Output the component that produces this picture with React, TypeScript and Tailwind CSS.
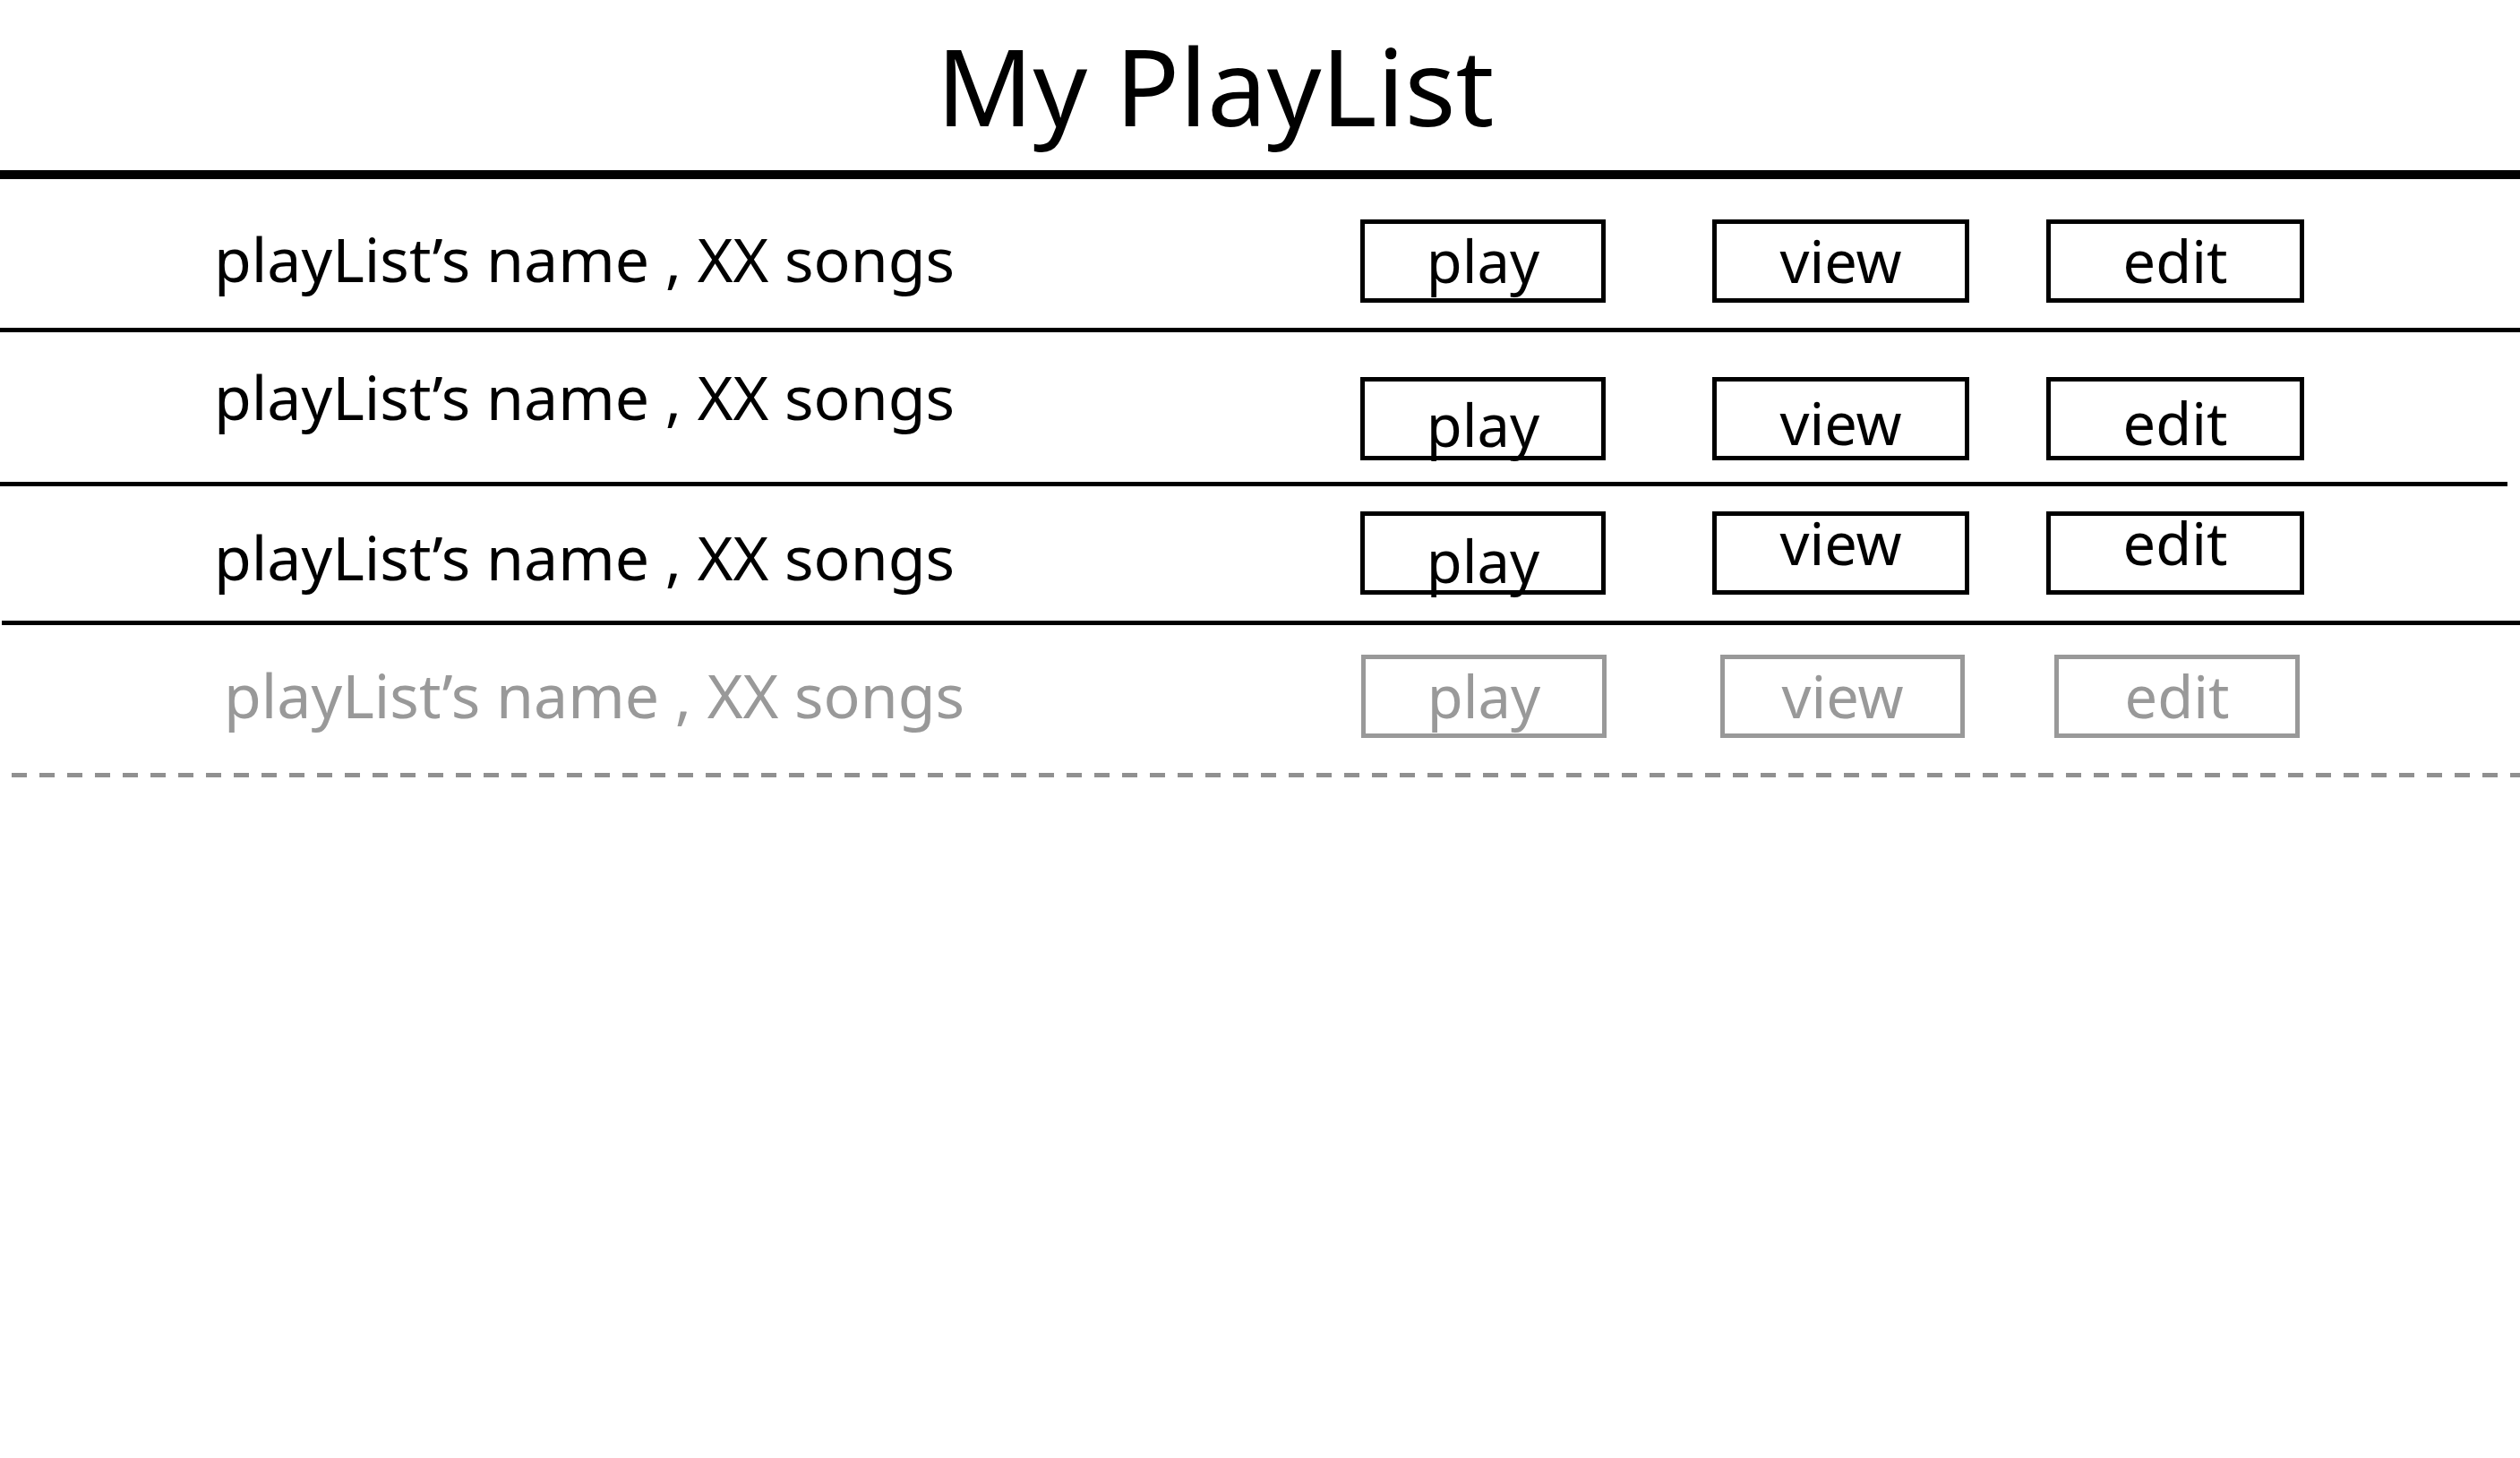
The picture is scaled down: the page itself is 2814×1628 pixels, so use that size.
const font = { fontFamily: '"Noto Sans", "Open Sans", sans-serif' };

type Btn = { label: string; w: string; text: string };
type Row = {
  height: string;
  labelCol: string;
  label: string;
  btnTop: string;
  gray?: boolean;
  buttons: Btn[];
  gaps: string[];
};

const rows: Row[] = [
  {
    height: 'h-[166px]',
    labelCol: 'w-[1519px] pl-[239px] pt-[55px]',
    label: 'text-black',
    btnTop: 'mt-[45px]',
    buttons: [
      { label: 'play', w: 'w-[274px]', text: 'pt-[9px]' },
      { label: 'view', w: 'w-[287px]', text: 'pt-[9px]' },
      { label: 'edit', w: 'w-[288px]', text: 'pt-[9px]' },
    ],
    gaps: ['ml-[119px]', 'ml-[86px]'],
  },
  {
    height: 'h-[167px]',
    labelCol: 'w-[1519px] pl-[239px] pt-[38px]',
    label: 'text-black',
    btnTop: 'mt-[50px]',
    buttons: [
      { label: 'play', w: 'w-[274px]', text: 'pt-[16px]' },
      { label: 'view', w: 'w-[287px]', text: 'pt-[14px]' },
      { label: 'edit', w: 'w-[288px]', text: 'pt-[14px]' },
    ],
    gaps: ['ml-[119px]', 'ml-[86px]'],
  },
  {
    height: 'h-[150px]',
    labelCol: 'w-[1519px] pl-[239px] pt-[45px]',
    label: 'text-black',
    btnTop: 'mt-[28px]',
    buttons: [
      { label: 'play', w: 'w-[274px]', text: 'pt-[18px]' },
      { label: 'view', w: 'w-[287px]', text: '-mt-[2px]' },
      { label: 'edit', w: 'w-[288px]', text: '-mt-[2px]' },
    ],
    gaps: ['ml-[119px]', 'ml-[86px]'],
  },
  {
    height: 'h-[165px]',
    labelCol: 'w-[1520px] pl-[250px] pt-[44px]',
    label: 'text-[#999999]',
    btnTop: 'mt-[33px]',
    gray: true,
    buttons: [
      { label: 'play', w: 'w-[274px]', text: 'pt-[9px]' },
      { label: 'view', w: 'w-[273px]', text: 'pt-[9px]' },
      { label: 'edit', w: 'w-[274px]', text: 'pt-[9px]' },
    ],
    gaps: ['ml-[127px]', 'ml-[100px]'],
  },
];

const separators = [
  'h-[5px] w-full bg-black',
  'h-[5px] w-[2800px] bg-black',
  'h-[5px] ml-[2px] bg-black',
  'h-[5px] ml-[13px] bg-[image:repeating-linear-gradient(to_right,#909090_0px,#909090_17px,transparent_17px,transparent_31px)]',
];

function PlaylistRow({ row }: { row: Row }) {
  return (
    <div className={`flex items-start ${row.height}`}>
      <div className={`shrink-0 ${row.labelCol}`}>
        <span className={`block whitespace-nowrap text-[68px] leading-none ${row.label}`}>
          playList’s name , XX songs
        </span>
      </div>
      <div className={`flex items-start ${row.btnTop}`}>
        {row.buttons.map((b, i) => (
          <div
            key={b.label}
            className={`flex h-[93px] shrink-0 items-start justify-center border-[5px] ${b.w} ${
              row.gray ? 'border-[#999999] text-[#999999]' : 'border-black text-black'
            } ${i > 0 ? row.gaps[i - 1] : ''}`}
          >
            <span className={`block whitespace-nowrap text-[65px] leading-none ${b.text}`}>{b.label}</span>
          </div>
        ))}
      </div>
    </div>
  );
}

export default function App() {
  return (
    <div className="min-h-screen w-full bg-white text-black" style={font}>
      <div className="flex h-[190px] justify-center pr-[100px] pt-[36px]">
        <h1 className="text-[119px] leading-none font-normal whitespace-nowrap">My PlayList</h1>
      </div>
      <div className="h-[10px] w-full bg-black" />
      {rows.map((row, i) => (
        <div key={i}>
          <PlaylistRow row={row} />
          <div className={separators[i]} />
        </div>
      ))}
    </div>
  );
}
